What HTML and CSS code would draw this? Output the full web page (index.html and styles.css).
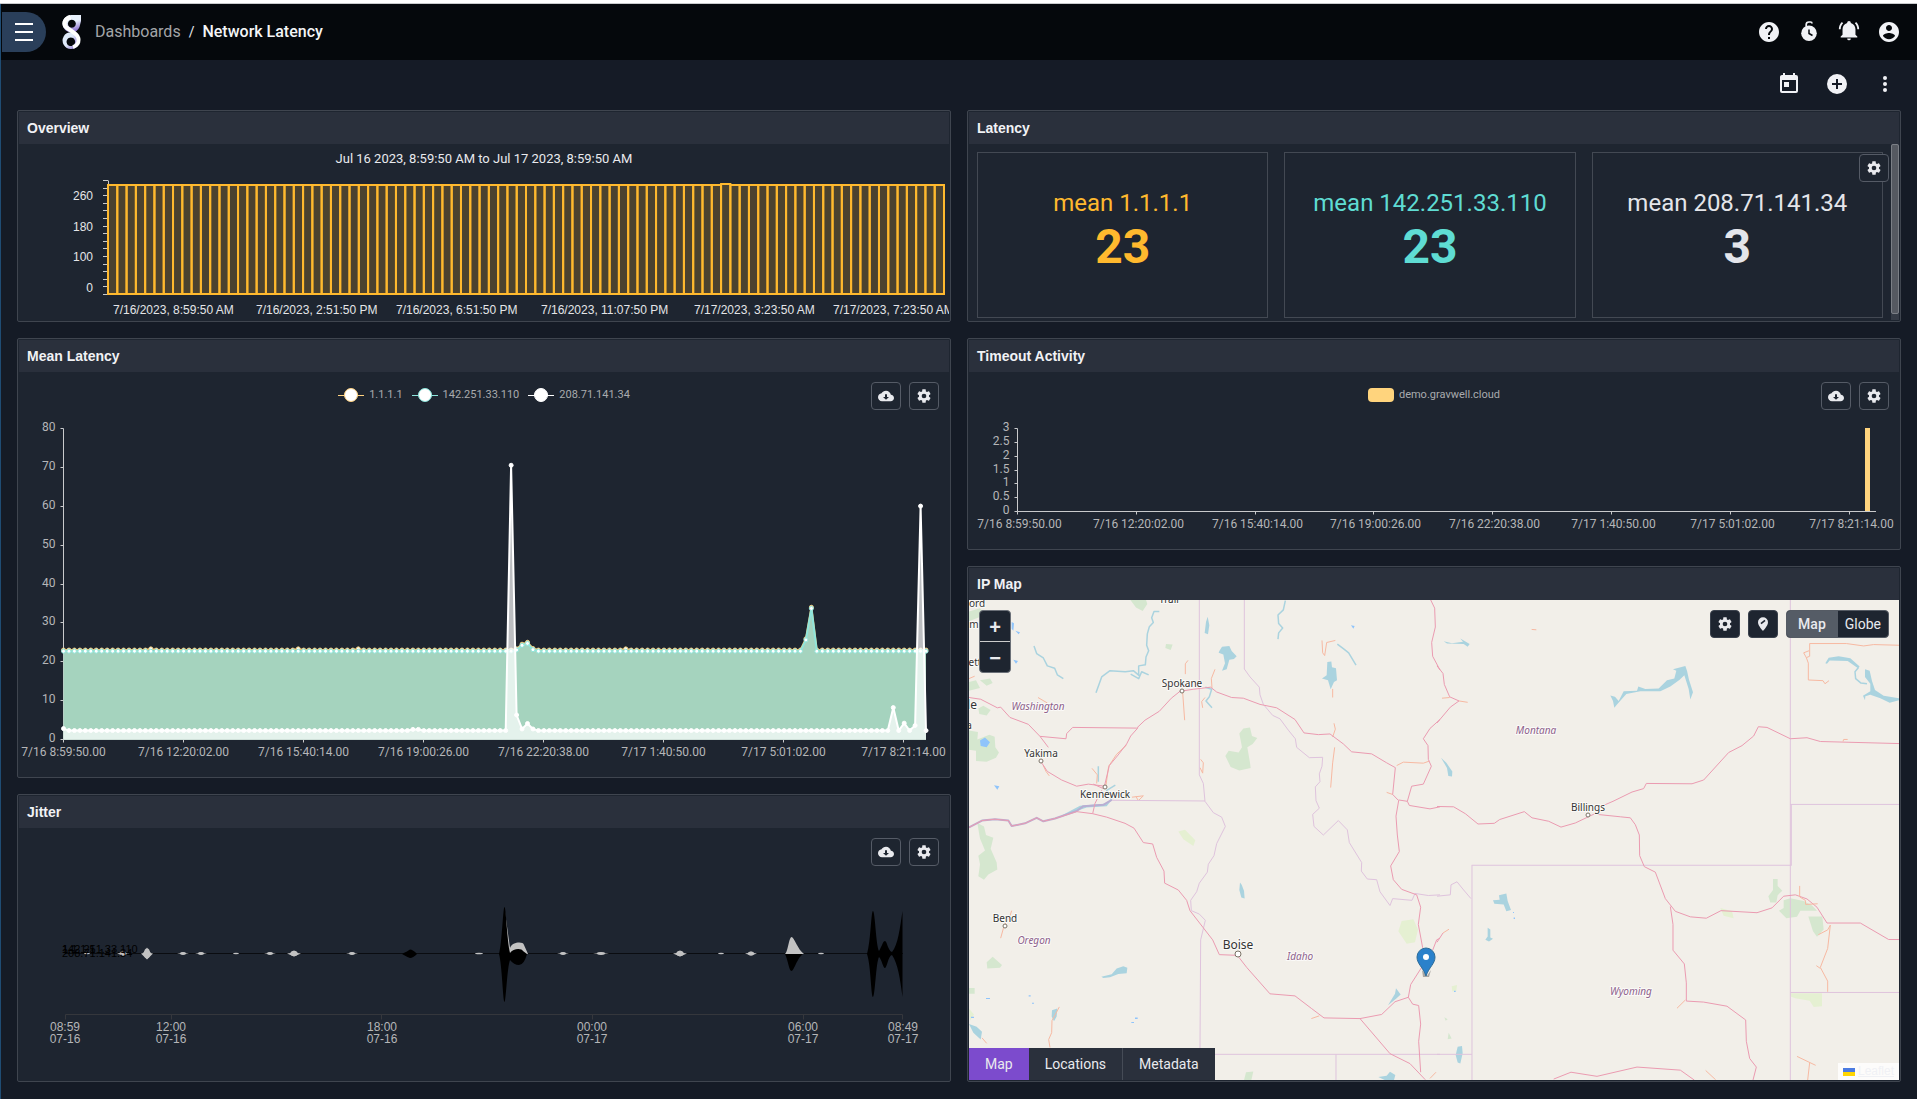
FILE: index.html
```html
<!DOCTYPE html>
<html lang="en">
    <head>
        <meta charset="utf-8" />
        <title>Network Latency</title>
        <link rel="stylesheet" href="styles.css">
    </head>
    <body>
        <!-- icon sprite -->
        <svg class="sprite" aria-hidden="true">
            <symbol id="i-help" viewBox="0 0 24 24"><path d="M12 2C6.48 2 2 6.48 2 12s4.48 10 10 10 10-4.48 10-10S17.52 2 12 2zm1 17h-2v-2h2v2zm2.07-7.75l-.9.92C13.45 12.9 13 13.5 13 15h-2v-.5c0-1.1.45-2.1 1.17-2.83l1.24-1.26c.37-.36.59-.86.59-1.41 0-1.1-.9-2-2-2s-2 .9-2 2H8c0-2.21 1.79-4 4-4s4 1.79 4 4c0 .88-.36 1.68-.93 2.25z" /></symbol>
            <symbol id="i-timer" viewBox="0 0 24 24">
                <circle cx="12" cy="13.2" r="7.8" />
                <path d="M9.2 6.5V4.5C9.2 2.8 10.5 2 12 2h1.5a1.5 1.5 0 0 1 1.5 1.5" fill="none" stroke="currentColor" stroke-width="1.7" />
                <path d="M12 9.5v4l3.5 2" fill="none" stroke="#05080c" stroke-width="1.5" />
            </symbol>
            <symbol id="i-bell" viewBox="-1 1 26 26"><path d="M21,19V20H3V19L5,17V11C5,7.9 7.03,5.17 10,4.29C10,4.19 10,4.1 10,4A2,2 0 0,1 12,2A2,2 0 0,1 14,4C14,4.1 14,4.19 14,4.29C16.97,5.17 19,7.9 19,11V17L21,19M14,21A2,2 0 0,1 12,23A2,2 0 0,1 10,21M19.75,3.19L18.33,4.61C20.04,6.3 21,8.6 21,11H23C23,8.07 21.84,5.25 19.75,3.19M1,11H3C3,8.6 3.96,6.3 5.67,4.61L4.25,3.19C2.16,5.25 1,8.07 1,11Z" /></symbol>
            <symbol id="i-user" viewBox="0 0 24 24"><path d="M12 2C6.48 2 2 6.48 2 12s4.48 10 10 10 10-4.48 10-10S17.52 2 12 2zm0 3c1.66 0 3 1.34 3 3s-1.34 3-3 3-3-1.34-3-3 1.34-3 3-3zm0 14.2c-2.5 0-4.71-1.28-6-3.22.03-1.99 4-3.08 6-3.08 1.99 0 5.97 1.09 6 3.08-1.29 1.94-3.5 3.22-6 3.22z" /></symbol>
            <symbol id="i-calendar" viewBox="0 0 24 24"><path d="M7,10H12V15H7M19,19H5V8H19M19,3H18V1H16V3H8V1H6V3H5C3.89,3 3,3.9 3,5V19A2,2 0 0,0 5,21H19A2,2 0 0,0 21,19V5A2,2 0 0,0 19,3Z" fill-rule="evenodd" /></symbol>
            <symbol id="i-plus" viewBox="0 0 24 24"><path d="M17,13H13V17H11V13H7V11H11V7H13V11H17M12,2A10,10 0 0,0 2,12A10,10 0 0,0 12,22A10,10 0 0,0 22,12A10,10 0 0,0 12,2Z" /></symbol>
            <symbol id="i-dots" viewBox="0 0 24 24"><circle cx="12" cy="6" r="2" /><circle cx="12" cy="12" r="2" /><circle cx="12" cy="18" r="2" /></symbol>
            <symbol id="i-cog" viewBox="0 0 24 24"><path d="M12,15.5A3.5,3.5 0 0,1 8.5,12A3.5,3.5 0 0,1 12,8.5A3.5,3.5 0 0,1 15.5,12A3.5,3.5 0 0,1 12,15.5M19.43,12.97C19.47,12.65 19.5,12.33 19.5,12C19.5,11.67 19.47,11.34 19.43,11L21.54,9.37C21.73,9.22 21.78,8.95 21.66,8.73L19.66,5.27C19.54,5.05 19.27,4.96 19.05,5.05L16.56,6.05C16.04,5.66 15.5,5.32 14.87,5.07L14.5,2.42C14.46,2.18 14.25,2 14,2H10C9.75,2 9.54,2.18 9.5,2.42L9.13,5.07C8.5,5.32 7.96,5.66 7.44,6.05L4.95,5.05C4.73,4.96 4.46,5.05 4.34,5.27L2.34,8.73C2.21,8.95 2.27,9.22 2.46,9.37L4.57,11C4.53,11.34 4.5,11.67 4.5,12C4.5,12.33 4.53,12.65 4.57,12.97L2.46,14.63C2.27,14.78 2.21,15.05 2.34,15.27L4.34,18.73C4.46,18.95 4.73,19.03 4.95,18.95L7.44,17.94C7.96,18.34 8.5,18.68 9.13,18.93L9.5,21.58C9.54,21.82 9.75,22 10,22H14C14.25,22 14.46,21.82 14.5,21.58L14.87,18.93C15.5,18.67 16.04,18.34 16.56,17.94L19.05,18.95C19.27,19.03 19.54,18.95 19.66,18.73L21.66,15.27C21.78,15.05 21.73,14.78 21.54,14.63L19.43,12.97Z" /></symbol>
            <symbol id="i-cloud" viewBox="0 0 24 24"><path d="M19.35 10.04C18.67 6.59 15.64 4 12 4 9.11 4 6.6 5.64 5.35 8.04 2.34 8.36 0 10.91 0 14c0 3.31 2.69 6 6 6h13c2.76 0 5-2.24 5-5 0-2.64-2.05-4.78-4.65-4.96zM16.5 13.5l-4.5 4-4.5-4h3V9.5h3v4z" /></symbol>
            <symbol id="i-pin" viewBox="0 0 24 24">
                <path d="M12 2a7.5 7.5 0 0 0-7.5 7.5C4.5 15 12 22.5 12 22.5S19.5 15 19.5 9.5A7.5 7.5 0 0 0 12 2z" />
                <path d="M9 11.5l6-5" fill="none" stroke="#1e2530" stroke-width="2.5" />
            </symbol>
        </svg>

        <div class="top-edge"></div>
        <div class="app">
            <header class="header">
                <button class="menu-btn" aria-label="Menu"><span></span><span></span><span></span></button>
                <svg class="logo" viewBox="0 0 20 34" role="img" aria-label="Gravwell">
                    <defs>
                        <linearGradient id="lgTop" x1="0" y1="0" x2="0.3" y2="1"><stop offset="0.5" stop-color="#e8f1fd" /><stop offset="1" stop-color="#8f74d2" /></linearGradient>
                        <linearGradient id="lgLow" x1="0" y1="0" x2="1" y2="0.7"><stop offset="0.5" stop-color="#dfeafa" /><stop offset="1" stop-color="#8f74d2" /></linearGradient>
                    </defs>
                    <path d="M9 0H19V6L17.5 12Q15.500 17 9.500 17.500A8.700 8.700 0 0 1 9 0zM9.800 4.800a4 4 0 1 0 .1 0z" fill="url(#lgTop)" fill-rule="evenodd" />
                    <path d="M9 17.200a8.400 8.400 0 1 1-.1 0zM8.800 22.500a4.300 4.300 0 1 0 .1 0z" fill="url(#lgLow)" fill-rule="evenodd" />
                    <path d="M8.500 2C3 3.500 1 8 3.500 11.500C6.500 15.500 14.500 17 16.300 23C17.200 27.500 15 31 11 32" fill="none" stroke="#fff" stroke-width="4" />
                </svg>
                <nav class="crumbs">
                    <a href="#">Dashboards</a>
                    <span class="slash">/</span>
                    <strong>Network Latency</strong>
                </nav>
                <div class="header-icons">
                    <button class="icon-btn" aria-label="Help"><svg><use href="#i-help" /></svg></button>
                    <button class="icon-btn" aria-label="Timers"><svg><use href="#i-timer" /></svg></button>
                    <button class="icon-btn" aria-label="Notifications"><svg><use href="#i-bell" /></svg></button>
                    <button class="icon-btn" aria-label="Account"><svg><use href="#i-user" /></svg></button>
                </div>
            </header>

            <div class="toolbar">
                <button class="icon-btn" aria-label="Timeframe"><svg><use href="#i-calendar" /></svg></button>
                <button class="icon-btn" aria-label="Add tile"><svg><use href="#i-plus" /></svg></button>
                <button class="icon-btn" aria-label="More"><svg><use href="#i-dots" /></svg></button>
            </div>

            <main class="grid">
                <div class="col">
                    <section class="panel">
                        <h2 class="panel-title">Overview</h2>
                        <div class="panel-body">
                            <p class="range">Jul 16 2023, 8:59:50 AM to Jul 17 2023, 8:59:50 AM</p>
                            <svg class="chart overview" id="overview" viewBox="0 0 930 146">
                                <g class="lbl end">
                                    <text x="74" y="26">260</text>
                                    <text x="74" y="57">180</text>
                                    <text x="74" y="87">100</text>
                                    <text x="74" y="118">0</text>
                                </g>
                                <g class="lbl">
                                    <text x="94" y="140">7/16/2023, 8:59:50 AM</text>
                                    <text x="237" y="140">7/16/2023, 2:51:50 PM</text>
                                    <text x="377" y="140">7/16/2023, 6:51:50 PM</text>
                                    <text x="522" y="140">7/16/2023, 11:07:50 PM</text>
                                    <text x="675" y="140">7/17/2023, 3:23:50 AM</text>
                                    <text x="814" y="140">7/17/2023, 7:23:50 AM</text>
                                </g>
                            </svg>
                        </div>
                    </section>

                    <section class="panel">
                        <h2 class="panel-title">Mean Latency</h2>
                        <div class="panel-body">
                            <div class="tools">
                                <button class="tool-btn" aria-label="Download"><svg><use href="#i-cloud" /></svg></button>
                                <button class="tool-btn" aria-label="Settings"><svg><use href="#i-cog" /></svg></button>
                            </div>
                            <ul class="legend">
                                <li class="lg-orange"><span class="dot"></span>1.1.1.1</li>
                                <li class="lg-teal"><span class="dot"></span>142.251.33.110</li>
                                <li class="lg-white"><span class="dot"></span>208.71.141.34</li>
                            </ul>
                            <svg class="chart" id="mean" viewBox="0 0 930 358"></svg>
                        </div>
                    </section>

                    <section class="panel">
                        <h2 class="panel-title">Jitter</h2>
                        <div class="panel-body">
                            <div class="tools">
                                <button class="tool-btn" aria-label="Download"><svg><use href="#i-cloud" /></svg></button>
                                <button class="tool-btn" aria-label="Settings"><svg><use href="#i-cog" /></svg></button>
                            </div>
                            <svg class="chart jitter" id="jitter" viewBox="0 0 930 252">
                                <path class="river-line" d="M46 125.5H884" />
                                <g class="river-light" id="blobs"></g>
                                <path class="river-light" d="M486 84L491 120C493 114 504 113 505 117L509 126H488zM766 126C769 124 770 109 772.5 109C775 109 779 122 785 126z" />
                                <path d="M383 126Q389 123 391 121.5Q394 121.5 398 126Q394 130 391 130Q388 129 383 126z" />
                                <path d="M480 126C483 116 484 79 485.5 79C487 79 488 112 491 125C494 120 503 120 504 123L508 126Q505 137 500 137Q495 137 491 132C488 140 487 174 485.5 174C484 174 483 136 480 126z" />
                                <path d="M766 126H784C778 130 775 143 772.5 143C770 143 769 132 766 126z" />
                                <path d="M848 126C852 112 852 83 854 83C856 83 857 118 860 123C863 118 864 113 866 113C868 113 869 123 873 124C879 117 881 100 883.5 83V169C881 150 879 136 873 127C869 128 868 140 866 140C864 140 863 132 860 129C857 134 856 169 854 169C852 169 852 138 848 126z" />
                                <g class="river-name">
                                    <text x="43" y="125">1.1.1.1</text>
                                    <text x="43" y="125">142.251.33.110</text>
                                    <text x="43" y="129">208.71.141.34</text>
                                </g>
                                <path class="river-axis" d="M46.5 191.5V186.5H883.5V191.5M152.5 186.5V191.5M362.5 186.5V191.5M573.5 186.5V191.5M784.5 186.5V191.5" />
                                <g class="lbl mid dim" id="jitterLabels"></g>
                            </svg>
                        </div>
                    </section>
                </div>

                <div class="col">
                    <section class="panel">
                        <h2 class="panel-title">Latency</h2>
                        <div class="panel-body scroller">
                            <div class="tools">
                                <button class="tool-btn" aria-label="Settings"><svg><use href="#i-cog" /></svg></button>
                            </div>
                            <div class="cards">
                                <div class="card orange"><span class="card-name">mean 1.1.1.1</span><b class="card-value">23</b></div>
                                <div class="card teal"><span class="card-name">mean 142.251.33.110</span><b class="card-value">23</b></div>
                                <div class="card"><span class="card-name">mean 208.71.141.34</span><b class="card-value">3</b></div>
                            </div>
                            <div class="track"><div class="thumb"></div></div>
                        </div>
                    </section>

                    <section class="panel">
                        <h2 class="panel-title">Timeout Activity</h2>
                        <div class="panel-body">
                            <div class="tools">
                                <button class="tool-btn" aria-label="Download"><svg><use href="#i-cloud" /></svg></button>
                                <button class="tool-btn" aria-label="Settings"><svg><use href="#i-cog" /></svg></button>
                            </div>
                            <ul class="legend">
                                <li><span class="swatch"></span>demo.gravwell.cloud</li>
                            </ul>
                            <svg class="chart" id="timeout" viewBox="0 0 930 130"></svg>
                        </div>
                    </section>

                    <section class="panel">
                        <h2 class="panel-title">IP Map</h2>
                        <div class="panel-body map">
                            <svg class="chart" viewBox="0 0 930 480">
                                <rect width="930" height="480" fill="#f2efe9" />
                                <!-- western tiles -->
                                <g class="geo" transform="translate(-9 -40) scale(.33333 .34377)">
                                    <path class="park" d="M27 496L54 500L52 522L88 508L104 514L106 545L117 560L108 575L80 587L48 585V555L27 552zM27 150L60 140L75 160L27 178zM511 116H558L562 128L548 148L528 138zM850 490L870 487L876 512L892 518L878 535L862 545L870 590L872 605L838 612L812 602L796 570L806 555L836 560L846 545L838 505zM52 765L72 775L78 800L100 808L92 840L110 880L112 900L85 915L72 930L55 920L60 885L55 860L75 845L60 810zM80 1170L98 1154L126 1178L120 1186L82 1188zM27 1245H44V1262H27zM858 1490L880 1488L874 1513H852zM618 244L638 246L632 262L616 256zM55 432L70 424L92 436L80 452L58 448zM60 350L90 345L98 358L80 366zM27 355L48 350L60 372L27 380z" />
                                    <path class="meadow" d="M1325 1050L1360 1045L1374 1075L1365 1112L1340 1116L1315 1080zM655 790L675 785L706 815L700 832L670 812zM27 1305L42 1322L30 1340z" />
                                    <path class="water" d="M778 265L786 252L808 250L815 265L830 280L822 288L808 290L800 318L786 322L795 300L790 275L776 270zM1102 297L1114 295L1116 312L1128 315L1131 350L1122 355L1112 376L1104 350L1086 345L1100 335zM738 180L743 165L748 190L744 216L734 212zM840 938L845 945L852 962L854 985L844 982L838 960zM424 1212L455 1205L470 1188L490 1182L502 1186L500 1202L475 1204L450 1214L430 1216zM276 1310L292 1305L290 1328L282 1342L275 1328zM1284 1295L1305 1262L1308 1246L1322 1264L1310 1275zM1255 1504L1280 1500L1290 1489L1306 1498L1302 1513H1275zM27 1350L50 1358L66 1372L62 1395L40 1375zM360 715L395 712L440 708L455 698L440 716L380 720L320 740L295 748z" />
                                    <path class="pond" d="M60 525L75 516L90 530L80 545L62 541zM102 655L118 658L112 668zM155 180L162 184L160 206L155 200zM166 206L180 210L176 216zM160 290L174 294L168 302zM1173 190L1184 192L1180 200zM514 1344H522V1347H514zM525 1331H533V1335H525zM78 1274H90V1277H78zM206 1266H212V1270H206zM216 1288H222V1291H216zM33 1329H42V1332H33z" />
                                    <path class="river" d="M598 150L582 150L575 168L580 182L568 194L562 215L560 248L566 264L558 282L556 305L536 308V335L520 322L496 325L450 322L425 340L408 386M566 334L545 325L536 345L512 332M222 250L230 272L250 285L262 308L284 315L292 334L310 345M976 118L970 145L954 160L956 185L968 198L956 212L954 230M1132 245L1150 258L1166 270L1188 306M736 370L755 376L748 398L738 410L756 430M415 600V645M455 698L440 670L466 655" />
                                    <path class="minor" d="M684 292L676 302V332M668 385L674 466M765 318L754 345L756 372M735 400L725 412L728 430M1086 234L1088 270L1094 278L1100 240L1126 234M1118 375V400M1122 475L1126 492L1118 515M1124 545L1118 590L1112 662M722 580L730 590L728 620L720 604M396 606L412 625L410 650M438 655L446 600L470 565L500 538M250 598L258 615L268 628M516 690L550 686L535 700L528 688M1310 598L1330 588L1390 591L1408 585M1280 676L1298 682M155 1020L150 1035L132 1065L122 1100M298 1300L276 1340L275 1375L266 1395L270 1418M1054 1334L1078 1326M1410 1508L1428 1490M234 400L262 416M66 1390L80 1406M27 345L44 338" />
                                    <path class="border" d="M718 116V625L730 650L735 702L760 735L785 748L796 775L770 825L762 860L745 885L742 908L718 940L710 965L692 990L694 1020L718 1030L736 1048L722 1105L720 1420M853 116V317L870 340L898 370L900 392L910 420L938 452L960 462L985 495L1006 520L1010 545L1048 575L1088 574L1086 600L1078 622L1080 645L1066 660L1068 700L1078 722L1058 740L1062 775L1090 800L1135 758L1162 785L1168 822L1205 880L1204 905L1222 928L1250 930L1260 965L1290 1005L1298 985L1356 990L1365 970L1405 976L1440 974M455 699L735 701M765 1438H1440M1128 1438V1513" />
                                    <path class="border west-river" d="M27 778L66 758L105 754L145 758L155 774L195 766L230 750L250 760L285 752L350 730L370 716L430 712L455 698" />
                                    <path class="road" d="M27 400L62 405L112 430L122 428L150 458L205 478L240 513L318 520L320 505L338 487L530 489L555 466L598 440L634 402L660 382L700 376L752 370L770 384L815 400L850 402L900 420L950 430L1005 464L1032 503L1075 508L1110 506L1150 535L1175 558L1235 564L1280 590L1306 604L1298 682L1316 700L1308 745L1312 800L1318 848L1292 890L1300 930L1325 958L1370 974L1382 1010L1375 1060L1388 1128M240 513L265 545M245 590L262 615L305 640L350 658L385 652L434 658M434 655L448 598L472 570L500 535L512 512L534 488M27 778L66 758L105 754L145 758L155 774L195 766L230 750L250 760L285 752L350 732L398 738L440 748L495 766L522 780L550 822L578 826L590 865L612 905L614 940L655 960L680 990L690 1020L730 1070L758 1105L778 1148L832 1150L860 1185L930 1262L1005 1268L1055 1305L1092 1332L1200 1334L1265 1322L1305 1285L1345 1272L1352 1235L1385 1185M1345 1272L1358 1292L1376 1296L1382 1350L1376 1400L1382 1490M1200 1334L1290 1436L1350 1465L1396 1512M1316 698L1342 702L1355 658L1390 652L1414 600L1405 580L1404 540L1390 520L1410 490L1440 464M1342 702L1348 714L1410 724L1440 718M1412 116L1424 140L1426 195L1415 240L1418 280L1440 320M1418 1135L1430 1105L1440 1100M398 738L405 708L425 670M400 652L430 665" />
                                </g>
                                <!-- eastern tiles -->
                                <g class="geo" transform="translate(468 -40) scale(.33333 .34377)">
                                    <path class="park" d="M1008 928H1022V948L1036 962L1022 975L1018 996H1000L994 978L1008 960zM1040 990L1060 984L1100 992L1125 1005L1140 1020L1090 1020L1080 1038L1048 1042L1026 1020L1040 1012zM1114 1037H1156L1160 1075L1140 1096L1128 1080zM35 1375L44 1392L32 1394zM22 1330L32 1336L26 1340z" />
                                    <path class="meadow" d="M1061 1260H1155V1298L1130 1300L1118 1282L1075 1275L1061 1270zM44 1240L60 1236L58 1254L46 1255zM850 1012L885 1022L890 1042L860 1035z" />
                                    <path class="water" d="M520 394L534 398L545 410L560 382L600 380L604 368L625 375L665 374L690 350L712 345L718 322L708 318L745 308L750 322L756 348L768 385L760 406L755 375L742 335L728 348L700 368L670 382L610 382L568 390L540 420L532 430L528 410zM12 575L28 590L46 615L45 630L34 628L30 605zM168 990L188 988L186 975L208 970L212 992L222 1018L208 1022L200 1002L172 1000zM152 1070L160 1075L160 1098L168 1102L156 1110L145 1105L152 1095zM62 1416L75 1414L77 1435L70 1465L62 1462L56 1440zM1165 300L1175 284L1205 280L1240 286L1268 310L1262 314L1232 294L1178 292L1170 302zM1284 318L1298 322L1305 352L1314 378L1340 395L1386 402V408L1358 415L1330 402L1300 392L1285 396L1284 408L1278 395L1300 382L1300 360L1284 340zM20 236L45 242L78 238L70 228L98 244L92 252L80 244L30 243z" />
                                    <path class="river" d="M1265 312L1254 325L1256 345L1272 358L1290 360" />
                                    <path class="pond" d="M51 1253H56V1257H51zM230 1040H234V1044H230zM228 1024H231V1027H228z" />
                                    <path class="border" d="M1060 116V889M1063 711V889M1060 711H1386M104 888H1063M105 888V1513M1060 889V1513M1060 1258H1386M0 1438H105M0 978L40 974L42 945L60 936L80 960L102 985" />
                                    <path class="road" d="M0 308L18 330L22 362L38 398L66 410L40 428L0 474M0 717L50 718L85 738L123 768L172 766L188 755L262 732L285 750L335 760L372 777L415 765L480 735M480 722L528 702L585 675L620 665L628 650L765 651L800 640L875 560L915 540L950 512L964 485L990 487L1060 520L1110 517L1150 528L1386 534M480 740L550 747L580 750L595 770L607 800L608 860L622 892L655 908L685 985L715 1022L760 1038L808 1042L852 1020L960 1026L1005 1012L1040 978L1075 974L1110 986L1140 1010L1170 1056L1270 1056L1355 1104H1386M700 1008L708 1060V1135L742 1175L748 1230V1283L800 1286L870 1298L926 1338L928 1400L938 1450L958 1475L948 1513M350 1510L402 1490L480 1502L600 1475L730 1484L772 1513M0 1112L18 1085" />
                                    <path class="minor" d="M15 402L38 400M66 410L92 414M284 202L298 203M1386 248L1310 246L1280 250L1228 243H1118V280L1108 284L1100 270L1116 264M1108 284L1114 300V349L1158 351L1164 360L1176 351M1088 948V980L1105 990L1106 1002L1142 1000M1144 1090L1172 1076L1180 1062L1172 1130L1150 1185L1172 1225V1256M1138 1180L1150 1188M720 1304L745 1280M1080 1444L1136 1470M1118 1462L1112 1513M806 1485L836 1512M1218 528L1220 522H1232M18 1085L36 1074" />
                                </g>
                                <g class="town-dots">
                                    <circle cx="213" cy="91" r="2" /><circle cx="72" cy="161" r="2" /><circle cx="136" cy="187" r="2" />
                                    <circle cx="36" cy="326" r="2" /><circle cx="619" cy="215" r="2" /><circle cx="269" cy="354" r="3" />
                                </g>
                                <g class="town">
                                    <text x="213" y="87">Spokane</text>
                                    <text x="72" y="157">Yakima</text>
                                    <text x="136" y="198">Kennewick</text>
                                    <text x="36" y="322">Bend</text>
                                    <text x="619" y="211">Billings</text>
                                    <text x="200" y="3">Trail</text>
                                    <text x="8" y="7">ord</text>
                                    <text x="5" y="28">m</text>
                                    <text x="6" y="66">ett</text>
                                    <text x="0" y="129">a</text>
                                    <text class="city" x="269" y="349">Boise</text>
                                    <text class="city" x="3" y="109">le</text>
                                </g>
                                <g class="state">
                                    <text x="69" y="110">Washington</text>
                                    <text x="65" y="344">Oregon</text>
                                    <text x="331" y="360">Idaho</text>
                                    <text x="567" y="134">Montana</text>
                                    <text x="662" y="395">Wyoming</text>
                                </g>
                                <path d="M453 370l5 6 4-6-2 7h-6z" fill="#777" opacity=".6" />
                                <path class="marker" d="M457 348a9 9 0 0 0-9 9c0 7 6 10 9 19 3-9 9-12 9-19a9 9 0 0 0-9-9z" />
                                <circle cx="457" cy="357" r="3" fill="#fff" />
                            </svg>
                            <div class="zoom">
                                <button aria-label="Zoom in">+</button>
                                <button aria-label="Zoom out">&minus;</button>
                            </div>
                            <div class="tools">
                                <button class="tool-btn" aria-label="Settings"><svg><use href="#i-cog" /></svg></button>
                                <button class="tool-btn" aria-label="Markers"><svg><use href="#i-pin" /></svg></button>
                                <div class="toggle">
                                    <button class="on">Map</button>
                                    <button>Globe</button>
                                </div>
                            </div>
                            <div class="tabs">
                                <button class="on">Map</button>
                                <button>Locations</button>
                                <button>Metadata</button>
                            </div>
                            <div class="attribution">
                                <svg width="12" height="8" viewBox="0 0 12 8"><path fill="#4c7be1" d="M0 0h12v4H0z" /><path fill="#ffd500" d="M0 4h12v4H0z" /></svg>
                                <a href="#">Leaflet</a>
                            </div>
                        </div>
                    </section>
                </div>
            </main>
        </div>
        <script src="script.js"></script>
    </body>
</html>
```
FILE: styles.css
```css
* {
    margin: 0;
    padding: 0;
    box-sizing: border-box;
}
body {
    font-family: Roboto, "Liberation Sans", sans-serif;
    background-color: #151b26;
    color: #e9eaee;
}
button {
    font-family: inherit;
    border: none;
    background: none;
    color: inherit;
    cursor: pointer;
}
a {
    color: inherit;
    text-decoration: none;
}
svg {
    display: block;
    fill: currentColor;
}
.sprite {
    position: absolute;
    width: 0;
    height: 0;
}
.top-edge {
    height: 4px;
    background-color: #fff;
    border-bottom: 1px solid #c9cbcd;
}
.app {
    min-height: calc(100vh - 4px);
    border-left: 1px solid #1f4c73;
}

/* header */
.header {
    display: flex;
    align-items: center;
    height: 56px;
    padding: 0 16px 0 1px;
    background-color: #05080c;
}
.menu-btn {
    display: flex;
    flex-direction: column;
    justify-content: center;
    gap: 6px;
    width: 44px;
    height: 40px;
    padding-left: 13px;
    background-color: #2a3f5a;
    border-radius: 0 20px 20px 0;
}
.menu-btn span {
    width: 18px;
    height: 2px;
    background-color: #fff;
}
.logo {
    width: 20px;
    height: 34px;
    margin: 0 13px 0 16px;
}
.crumbs {
    display: flex;
    align-items: center;
    gap: 8px;
    flex: 1;
    font-size: 16px;
    line-height: 24px;
}
.crumbs a {
    color: #a3a5a8;
}
.crumbs strong {
    font-weight: 500;
    color: #f4f5f7;
}
.slash {
    font-size: 14px;
}
.header-icons {
    display: flex;
    gap: 16px;
}
.icon-btn,
.icon-btn svg {
    width: 24px;
    height: 24px;
    color: #f1f2f6;
}
.toolbar {
    display: flex;
    justify-content: flex-end;
    gap: 24px;
    padding: 12px 20px 14px;
}

/* panels */
.grid {
    display: grid;
    grid-template-columns: 1fr 1fr;
    gap: 16px;
    padding: 0 16px 16px;
}
.col {
    display: flex;
    flex-direction: column;
    gap: 16px;
    min-width: 0;
}
.panel {
    padding: 1px;
    background-color: #1e2530;
    border: 1px solid #3f454f;
    border-radius: 2px;
}
.panel-title {
    padding: 0 8px;
    font: bold 14px/32px "Liberation Sans", sans-serif;
    color: #f1f2f5;
    background-color: #2a303c;
}
.panel-body {
    position: relative;
}
.tools {
    position: absolute;
    top: 10px;
    right: 10px;
    display: flex;
    gap: 8px;
}
.tool-btn {
    display: flex;
    align-items: center;
    justify-content: center;
    width: 30px;
    height: 28px;
    background-color: #1e2530;
    border: 1px solid #555b66;
    border-radius: 4px;
}
.tool-btn svg {
    width: 16px;
    height: 16px;
}

/* charts */
.chart {
    width: 100%;
    height: auto;
    overflow: hidden;
    font-size: 12px;
}
.chart .lbl {
    fill: #e4e5e8;
}
.chart .dim {
    fill: #b5b6b8;
}
.overview,
.jitter {
    font-family: "Liberation Sans", sans-serif;
}
.end {
    text-anchor: end;
}
.mid {
    text-anchor: middle;
}
.range {
    font-size: 13px;
    line-height: 30px;
    text-align: center;
}
.bar {
    fill: #ffb92e;
    fill-opacity: 0.2;
    stroke: #ffb92e;
    stroke-width: 2;
}
.axis {
    fill: none;
    stroke: #c9cacc;
}
.legend {
    display: flex;
    align-items: center;
    justify-content: center;
    gap: 9px;
    height: 46px;
    list-style: none;
    font-size: 11px;
    line-height: 14px;
    color: #a9abae;
}
.legend li {
    display: flex;
    align-items: center;
    gap: 5px;
}
.dot {
    display: flex;
    align-items: center;
    justify-content: center;
    width: 26px;
    height: 14px;
    color: #fff;
    background: linear-gradient(currentColor, currentColor) center / 26px 1px no-repeat;
}
.dot::before {
    content: "";
    width: 12px;
    height: 12px;
    background-color: #fff;
    border: 1px solid currentColor;
    border-radius: 50%;
}
.lg-orange .dot {
    color: #ffd280;
}
.lg-teal .dot {
    color: #8be5dc;
}
.swatch {
    width: 26px;
    height: 14px;
    background-color: #ffd47d;
    border-radius: 4px;
}
.line {
    fill: none;
    stroke-width: 2;
}
.pt {
    fill: #fff;
}
.s-orange {
    stroke: #e9c878;
}
.s-teal {
    stroke: #90e5db;
}
.s-white {
    stroke: #fff;
}
.river-line {
    stroke: #0a0c10;
}
.jitter path,
.jitter .river-name {
    fill: #000;
}
.jitter .river-light,
.jitter .river-light path {
    fill: #c2c2c2;
}
.river-name {
    font-size: 11px;
}
.jitter .river-axis {
    fill: none;
    stroke: #35373c;
}

/* latency cards */
.scroller {
    display: flex;
}
.cards {
    display: flex;
    flex: 1;
    gap: 16px;
    padding: 8px 8px 2px;
}
.card {
    display: flex;
    flex: 1;
    flex-direction: column;
    align-items: center;
    height: 166px;
    padding-top: 32px;
    border: 1px solid #434953;
    color: #e4e5ea;
}
.card-name {
    font-size: 24px;
    line-height: 36px;
}
.card-value {
    font-size: 48px;
    line-height: 52px;
}
.orange {
    color: #ffb92e;
}
.teal {
    color: #5fdcd3;
}
.track {
    width: 8px;
    padding-bottom: 6px;
    background-color: #353b46;
}
.thumb {
    height: 100%;
    background-color: #555961;
    border: 1px solid #7b7f86;
    border-radius: 2px;
}

/* map */
.geo path {
    vector-effect: non-scaling-stroke;
}
.park {
    fill: #d5e7cf;
}
.meadow {
    fill: #e5f0d2;
}
.water {
    fill: #aad3df;
}
.pond {
    fill: #8fc4fb;
}
.river,
.minor,
.border,
.road {
    fill: none;
    stroke-linejoin: round;
}
.river {
    stroke: #aad3df;
    stroke-width: 1.5;
}
.minor {
    stroke: #f7b9a2;
}
.border {
    stroke: #dfc3dd;
}
.west-river {
    stroke: #b9aed2;
    stroke-width: 2;
}
.road {
    stroke: #eb9bb1;
}
.town-dots circle {
    fill: #fff;
    stroke: #7b7367;
}
.town,
.state {
    font-family: "Noto Sans", sans-serif;
    font-size: 10px;
    text-anchor: middle;
    fill: #333;
    stroke: #fbfaf8;
    stroke-width: 2;
    stroke-linejoin: round;
    paint-order: stroke;
}
.town .city {
    font-size: 12px;
}
.state {
    font-style: italic;
    fill: #8d618b;
}
.marker {
    fill: #2a81cb;
    stroke: #2e6c97;
}
.zoom {
    position: absolute;
    top: 10px;
    left: 10px;
    width: 32px;
    background-color: #1e2530;
    border: 1px solid #6b7078;
    border-radius: 4px;
}
.zoom button {
    display: block;
    width: 30px;
    height: 30px;
    font: bold 20px/32px "Liberation Sans", sans-serif;
}
.zoom button + button {
    height: 31px;
    border-top: 1px solid #ccc;
}
.map .tool-btn {
    border-color: #3a414c;
}
.toggle {
    display: flex;
    overflow: hidden;
    height: 28px;
    background-color: #1e2530;
    border: 1px solid #555b64;
    border-radius: 4px;
}
.toggle button {
    padding: 0 7px;
    font-size: 14px;
}
.toggle .on {
    padding: 0 12px 0 11px;
    font-weight: 500;
    background-color: #555c66;
}
.tabs {
    position: absolute;
    bottom: 0;
    left: 0;
    display: flex;
    background-color: #2a303c;
}
.tabs button {
    height: 32px;
    padding: 0 16px;
    font-size: 14px;
}
.tabs button + button + button {
    border-left: 1px solid #454b56;
}
.tabs .on {
    background-color: #7c4bcd;
}
.attribution {
    position: absolute;
    right: 0;
    bottom: 0;
    display: flex;
    align-items: center;
    gap: 3px;
    padding: 0 5px;
    font: 12px/17px "Liberation Sans", sans-serif;
    color: #f0f1f5;
    background-color: rgba(255, 255, 255, 0.8);
}
.attribution a {
    text-decoration: underline;
}
```
FILE: script.js
```js
const NS = "http://www.w3.org/2000/svg";
const $ = (id) => document.getElementById(id);

function add(parent, tag, attrs, text) {
    const el = document.createElementNS(NS, tag);
    for (const k in attrs) el.setAttribute(k, attrs[k]);
    if (text !== undefined) el.textContent = text;
    parent.appendChild(el);
    return el;
}

// overview histogram
function drawOverview() {
    const svg = $("overview");
    let d = "M89.5 6.5V120";
    for (let i = 0; i < 16; i++) d += `M84 ${Math.round(6 + i * 7.6) + 0.5}H89`;
    add(svg, "path", { class: "axis", d });
    const step = 836 / 90;
    for (let i = 0; i < 90; i++) {
        const top = i === 66 ? 10 : 11;
        add(svg, "rect", { class: "bar", x: 89 + i * step, y: top, width: step, height: 120 - top });
    }
}

const times = ["7/16 8:59:50.00", "7/16 12:20:02.00", "7/16 15:40:14.00", "7/16 19:00:26.00", "7/16 22:20:38.00", "7/17 1:40:50.00", "7/17 5:01:02.00", "7/17 8:21:14.00"];

function drawAxes(svg, o) {
    let d = `M${o.x} ${o.top}V${o.bottom}H${o.right}`;
    const g = add(svg, "g", { class: "lbl dim end" });
    o.ticks.forEach((t, i) => {
        const y = Math.round(o.bottom - 0.5 - (i * (o.bottom - o.top)) / (o.ticks.length - 1)) + 0.5;
        d += `M${o.x - 3} ${y}H${o.x}`;
        add(g, "text", { x: o.x - 8, y: y + 2.5 }, t);
    });
    const gx = add(svg, "g", { class: "lbl dim mid" });
    times.forEach((t, i) => {
        const x = Math.round(o.x - 0.5 + i * o.step) + 0.5;
        d += `M${x} ${o.bottom}v3`;
        add(gx, "text", { x: x + o.shift, y: o.bottom + 16.5 }, t);
    });
    add(svg, "path", { class: "axis", d });
}

// mean latency lines
function drawMean() {
    const svg = $("mean"), n = 159, x0 = 44.5, y0 = 321.5;
    drawAxes(svg, { x: x0, top: 10.5, bottom: y0, right: 907, step: 120, shift: 0, ticks: [0, 10, 20, 30, 40, 50, 60, 70, 80] });
    const series = (base, over) => Array.from({ length: n }, (_, i) => over[i] ?? base);
    const teal = series(22.7, { 83: 23, 84: 24.2, 85: 24.7, 86: 23.1, 136: 25.6, 137: 33.7 });
    const orange = teal.map((v, i) => v + ([16, 43, 54, 103].includes(i) ? 0.6 : 0.3));
    const white = series(2.3, { 0: 2.8, 64: 2.6, 65: 2.6, 82: 70.5, 83: 6.3, 84: 2.7, 85: 4.1, 86: 2.7, 152: 8.2, 154: 4.2, 156: 3.6, 157: 60 });
    const xy = (vals) => vals.map((v, i) => [x0 + i * 5.459, y0 - v * 3.89]);
    const draw = (vals, cls, fill, alpha) => {
        const pts = xy(vals), line = pts.map((p) => p.map((v) => v.toFixed(1)).join(" ")).join("L");
        if (fill) add(svg, "path", { d: `M${x0} ${y0}L${line}V${y0}z`, fill, "fill-opacity": alpha });
        add(svg, "path", { class: "line " + cls, d: "M" + line });
        pts.forEach(([cx, cy]) => add(svg, "circle", { class: "pt " + cls, cx, cy, r: 2 }));
    };
    draw(orange, "s-orange");
    draw(teal, "s-teal", "#a5d3be", 1);
    draw(white, "s-white", "#fff", 0.7);
}

// timeout bars
function drawTimeout() {
    const svg = $("timeout");
    drawAxes(svg, { x: 48.5, top: 10.5, bottom: 93.5, right: 907, step: 118.8, shift: 2, ticks: ["0", "0.5", "1", "1.5", "2", "2.5", "3"] });
    add(svg, "rect", { x: 896, y: 10, width: 5, height: 83, fill: "#ffd47d" });
}

function drawJitter() {
    // x, half width, half height of the light bumps along the stream
    const bumps = [[68, 6, 1], [104, 6, 3], [128, 6, 7], [164, 6, 2], [182, 6, 2], [217, 6, 1], [251, 6, 2], [275, 7, 4], [333, 6, 2], [460, 8, 1], [544, 6, 2], [582, 8, 2], [661, 7, 4], [702, 6, 1], [732, 6, 3], [802, 6, 1]];
    bumps.forEach(([x, w, h]) => {
        const y = 125.5;
        add($("blobs"), "path", { d: `M${x - w} ${y}Q${x - 3} ${y} ${x} ${y - h + 1}Q${x + 3} ${y} ${x + w} ${y}L${x} ${y + h - 1}z` });
        add($("blobs"), "ellipse", { cx: x, cy: y, rx: w / 2, ry: h * 0.7 });
    });
    const labels = [[46, "08:59", "07-16"], [152, "12:00", "07-16"], [363, "18:00", "07-16"], [573, "00:00", "07-17"], [784, "06:00", "07-17"], [884, "08:49", "07-17"]];
    labels.forEach(([x, a, b]) => {
        add($("jitterLabels"), "text", { x, y: 203 }, a);
        add($("jitterLabels"), "text", { x, y: 215 }, b);
    });
}

drawOverview();
drawMean();
drawTimeout();
drawJitter();
```
